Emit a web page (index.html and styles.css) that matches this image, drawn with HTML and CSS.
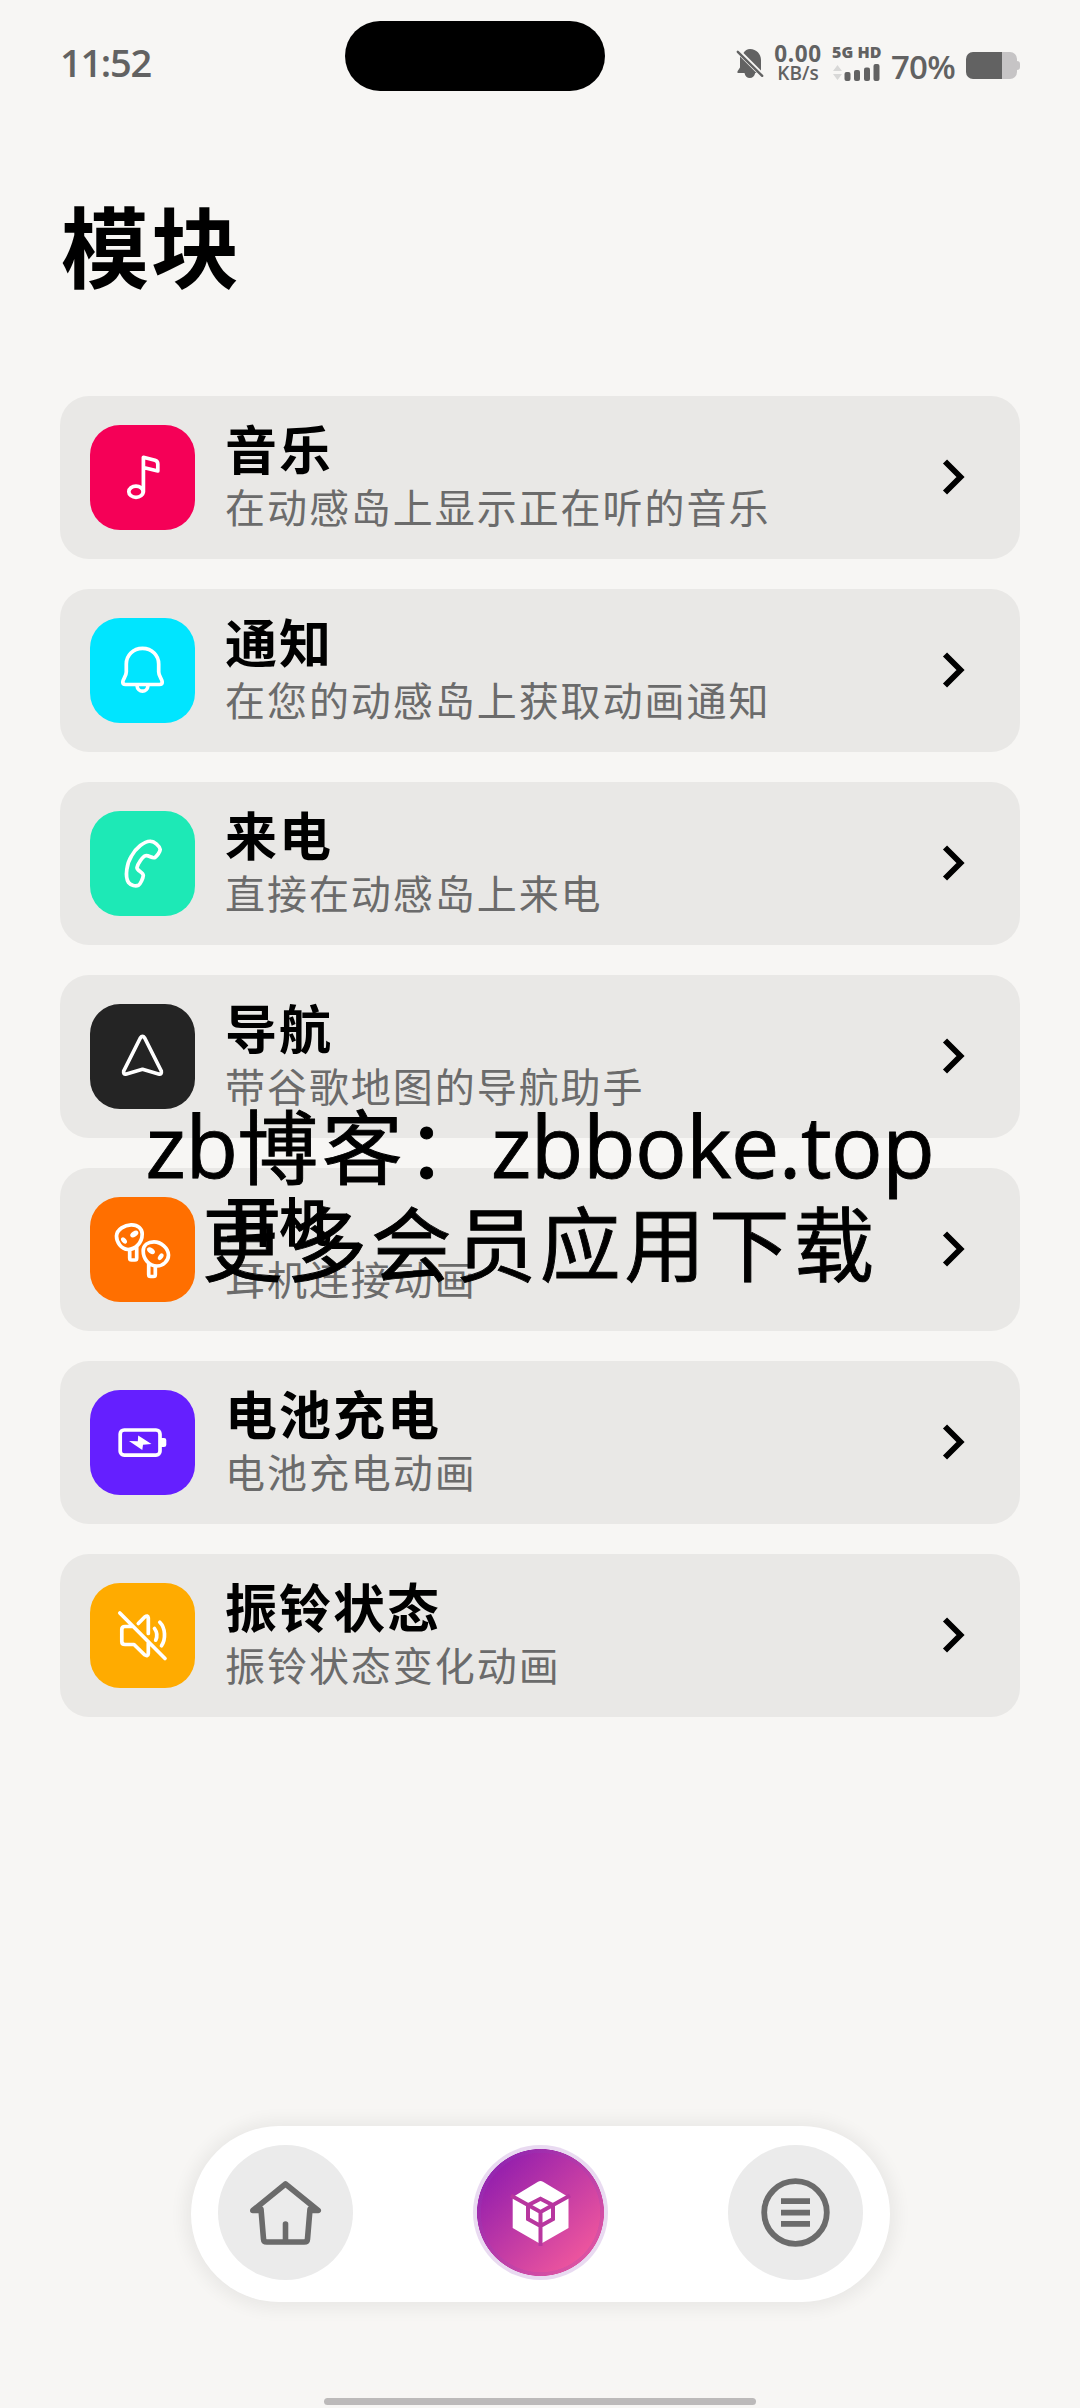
FILE: index.html
```html
<!DOCTYPE html>
<html lang="zh-CN">
<head>
<meta charset="utf-8">
<title>模块</title>
<link rel="stylesheet" href="styles.css">
</head>
<body>
<div class="screen">
  <header class="status">
    <span class="time">11:52</span>
    <div class="island"></div>
    <div class="indicators">
      <svg class="mute-bell" width="28" height="32" viewBox="0 0 28 32" fill="#626262">
        <path d="M7.500 5C9 2.600 11.400 1 14 1c6.500 0 11 5 11 11v10.500zM4 8.500L20.500 25H19.200c-.8 3.200-2.700 5-5.400 5s-4.600-1.800-5.300-5H1.500v-1.800l2.500-3.700z"/>
        <path d="M1.800 3.800L26.200 27.800" stroke="#626262" stroke-width="2.400" stroke-linecap="round"/>
      </svg>
      <div class="speed"><span class="speed-num">0.00</span><span class="speed-unit">KB/s</span></div>
      <div class="network">
        <span class="network-type">5G HD</span>
        <svg width="48" height="17" viewBox="0 0 48 17" fill="#626262">
          <path d="M1 7L5.500 1 10 7zM1 10h9l-4.500 6z" fill="#d8d8d7"/>
          <rect x="12.500" y="8" width="6" height="9" rx="2"/><rect x="22" y="6" width="6" height="11" rx="2"/><rect x="32" y="3.500" width="6" height="13.500" rx="2"/><rect x="41.500" y="0" width="6" height="17" rx="2"/>
        </svg>
      </div>
      <span class="percent">70%</span>
      <svg class="battery" width="54" height="27" viewBox="0 0 54 27">
        <path d="M36 0h8a7 7 0 0 1 7 7v2q3 0 3 3v3q0 3-3 3v2a7 7 0 0 1-7 7h-8z" fill="#c6c4c5"/>
        <path d="M36 0H7a7 7 0 0 0-7 7v13a7 7 0 0 0 7 7h29z" fill="#626262"/>
      </svg>
    </div>
  </header>

  <h1 class="heading">模块</h1>

  <main class="modules">
    <a class="card">
      <span class="tile music"><svg viewBox="0 0 105 105"><ellipse cx="46" cy="66.700" rx="7.200" ry="5.600"/><path d="M53.400 67V32.300L65 35.300Q67.800 36.200 67.800 39V46L53.400 42.500"/></svg></span>
      <span class="text"><b class="name">音乐</b><span class="desc">在动感岛上显示正在听的音乐</span></span>
      <svg class="chevron" viewBox="0 0 24 40"><path d="M3 4.500L18.500 20 3 35.500"/></svg>
    </a>
    <a class="card">
      <span class="tile notice"><svg viewBox="0 0 105 105"><path d="M52.500 30.300C43 30.300 36.300 37.500 36.300 46V54C36.300 58 33 61 32.800 64Q32.800 66.500 35.500 66.500H69.500Q72.200 66.500 72.200 64C72 61 68.700 58 68.700 54V46C68.700 37.500 62 30.300 52.500 30.300ZM47 67.500C47.500 75 57.500 75 58 67.500"/></svg></span>
      <span class="text"><b class="name">通知</b><span class="desc">在您的动感岛上获取动画通知</span></span>
      <svg class="chevron" viewBox="0 0 24 40"><path d="M3 4.500L18.500 20 3 35.500"/></svg>
    </a>
    <a class="card">
      <span class="tile call"><svg viewBox="0 0 105 105"><path d="M61 30.300C64 30.300 69.800 35 70.200 38.500C70 41 67 45 65 46.500C62 47.800 59 44 55.500 44.800C52.500 45.500 47.500 53.500 47 56.500C46.800 60 53.300 61 53.300 64.500C53 67.500 50.500 73 48.500 74.300C45.500 75.500 41 74.500 38.500 71.500C34.500 65 37 52 41.500 45C45.500 37.500 54.500 29.500 61 30.300Z"/></svg></span>
      <span class="text"><b class="name">来电</b><span class="desc">直接在动感岛上来电</span></span>
      <svg class="chevron" viewBox="0 0 24 40"><path d="M3 4.500L18.500 20 3 35.500"/></svg>
    </a>
    <a class="card">
      <span class="tile route"><svg viewBox="0 0 105 105"><path d="M50.300 34Q52.500 30.800 54.700 34L71.300 67Q72 70.800 68.500 70L52.500 65.300 36.500 70Q33 70.800 33.700 67Z"/></svg></span>
      <span class="text"><b class="name">导航</b><span class="desc">带谷歌地图的导航助手</span></span>
      <svg class="chevron" viewBox="0 0 24 40"><path d="M3 4.500L18.500 20 3 35.500"/></svg>
    </a>
    <a class="card">
      <span class="tile buds"><svg viewBox="0 0 105 105">
        <path d="M41 27.800C48 27.500 52.200 32 52.200 37C52.200 46 45 52.500 38 52.500C31 52 26.500 45 26.500 39C27 32 35 28 41 27.800ZM39.700 53V61Q39.700 63 41.500 63H45Q46.700 63 46.700 61V50"/>
        <path d="M64 44.800C71 44.800 78.300 51 78.500 58C78.500 64 73 69 67 69C59 69 53.200 62 53.200 54C53.200 48 58 44.800 64 44.800ZM58.700 67V77.500Q58.700 79.500 60.500 79.500H63.500Q65.300 79.500 65.300 77.500V69"/>
        <g fill="#fff" stroke="none"><ellipse cx="44.300" cy="37" rx="4.500" ry="2.700" transform="rotate(-35 44.300 37)"/><ellipse cx="34" cy="43.500" rx="3.600" ry="2.300" transform="rotate(50 34 43.500)"/><ellipse cx="61" cy="53.800" rx="4.300" ry="2.700" transform="rotate(35 61 53.800)"/><ellipse cx="70.700" cy="59.700" rx="3.700" ry="2.300" transform="rotate(-55 70.700 59.700)"/></g>
      </svg></span>
      <span class="text"><b class="name">耳机</b><span class="desc">耳机连接动画</span></span>
      <svg class="chevron" viewBox="0 0 24 40"><path d="M3 4.500L18.500 20 3 35.500"/></svg>
    </a>
    <a class="card">
      <span class="tile power"><svg viewBox="0 0 105 105"><rect x="30.200" y="40" width="39.800" height="25.200" rx="4"/><path d="M71 48h3q2.300 0 2.300 2v5q0 2-2.300 2h-3zM48.200 45.500L61.500 54 53 54.800 52.300 60 39 51 47.800 51.300Z" fill="#fff" stroke="none"/></svg></span>
      <span class="text"><b class="name">电池充电</b><span class="desc">电池充电动画</span></span>
      <svg class="chevron" viewBox="0 0 24 40"><path d="M3 4.500L18.500 20 3 35.500"/></svg>
    </a>
    <a class="card">
      <span class="tile ring"><svg viewBox="0 0 105 105"><path d="M29.800 30L75 75.500M42 43.500H35Q31.800 43.500 31.800 46.500V58.500Q31.800 61.500 35 61.500H44L54.500 71.800Q58 74 58.300 70.500V58.500M48.300 40.500L54.700 34Q58 31.800 58.300 35V50.500M64.500 45.500Q68.500 51 65.700 57.200M69.800 39.300C75.500 45 76 56 71.500 62.800"/></svg></span>
      <span class="text"><b class="name">振铃状态</b><span class="desc">振铃状态变化动画</span></span>
      <svg class="chevron" viewBox="0 0 24 40"><path d="M3 4.500L18.500 20 3 35.500"/></svg>
    </a>
  </main>

  <nav class="dock">
    <span class="dock-item"><svg viewBox="0 0 135 135" fill="none" stroke="#6b6b6b" stroke-width="5.600" stroke-linecap="round" stroke-linejoin="round"><path d="M42 65.500H34.800L67.500 39 100.200 65.500H93M43 64L45.500 94Q45.700 97 48.700 97H86.300Q89.300 97 89.500 94L92 64"/><path d="M67.500 79V96"/></svg></span>
    <span class="dock-item active"><svg viewBox="0 0 135 135"><path d="M65 36.800Q67.500 35.300 70 36.800L93.700 51Q95.500 52 95.500 54V83L67.500 99 39.700 83V54Q39.700 52 41.500 51Z" fill="#fff"/><path d="M38 50.500L67.500 67 97 50.500M67.500 67V101M67.500 53.700L80 60.300V74L67.500 81 55 74V60.300Z" fill="none" stroke="#b8369f" stroke-width="4"/></svg></span>
    <span class="dock-item"><svg viewBox="0 0 135 135"><circle cx="67.500" cy="67.500" r="31.300" fill="none" stroke="#6b6b6b" stroke-width="5.800"/><path d="M53 53.300h29v5.700H53zM53 64.700h29v5.700H53zM53 76h29v5.700H53z" fill="#6b6b6b"/></svg></span>
  </nav>
  <div class="home-bar"></div>

  <div class="watermark">
    <div class="mark-line"><span class="latin">zb</span>博客：<span class="latin">zbboke.top</span></div>
    <div class="mark-line">更多会员应用下载</div>
  </div>
</div>
</body>
</html>
```
FILE: styles.css
```css
* { box-sizing: border-box; }

body {
  margin: 0;
  background: #f7f6f4;
  font-family: "Noto Sans CJK SC", sans-serif;
  color: #000;
}

.screen {
  position: relative;
  display: flex;
  flex-direction: column;
  width: 1080px;
  height: 2408px;
  overflow: hidden;
}

.status {
  display: grid;
  grid-template-columns: 285px 260px 1fr;
  height: 112px;
  padding: 21px 60px 0;
  color: #626262;
  font-family: "Open Sans", "Noto Sans", sans-serif;
}

.time {
  padding-top: 13px;
  font-size: 38px;
  font-weight: 600;
  line-height: 56px;
  letter-spacing: -1.300px;
}

.island {
  height: 70px;
  border-radius: 35px;
  background: #000;
}

.indicators {
  display: flex;
  justify-content: flex-end;
  align-items: flex-start;
  height: 70px;
  padding-top: 23px;
  white-space: nowrap;
}

.mute-bell { margin: 4px 8px 0 0; }

.speed, .network { display: flex; flex-direction: column; }

.speed { align-items: center; width: 52px; margin-right: 8px; }

.speed-num {
  font-size: 22.500px;
  font-weight: 700;
  line-height: 20px;
  letter-spacing: .6px;
}

.speed-unit {
  font-size: 19px;
  font-weight: 600;
  line-height: 18px;
}

.network { width: 48px; gap: 3px; margin-right: 11px; }

.network-type {
  font-size: 16px;
  font-weight: 800;
  line-height: 17px;
}

.percent {
  width: 67px;
  margin-right: 8px;
  font-size: 33px;
  font-weight: 600;
  line-height: 45px;
  letter-spacing: -.8px;
}

.battery { margin-top: 8px; }

.heading {
  margin: 71px 0 0 61px;
  font-size: 88px;
  font-weight: 700;
  line-height: 120px;
  letter-spacing: 2px;
}

.modules {
  display: flex;
  flex-direction: column;
  gap: 30px;
  margin: 93px 60px 0;
}

.card {
  display: flex;
  align-items: center;
  height: 163px;
  padding: 0 54px 0 30px;
  border-radius: 29px;
  background: #e9e8e6;
}

.tile {
  width: 105px;
  height: 105px;
  border-radius: 30px;
}

.tile svg {
  display: block;
  fill: none;
  stroke: #fff;
  stroke-width: 3.700;
  stroke-linecap: round;
  stroke-linejoin: round;
}

.music { background: #f50057; }
.notice { background: #00e5ff; }
.call { background: #1de9b6; }
.route { background: #242424; }
.buds { background: #ff6f00; }
.power { background: #651fff; }
.ring { background: #ffab00; }

.text {
  display: flex;
  flex: 1;
  flex-direction: column;
  margin-left: 30px;
  padding-bottom: 1px;
}

.name {
  font-size: 52px;
  line-height: 58px;
  letter-spacing: 2px;
}

.desc {
  color: #6b6b6b;
  font-size: 40px;
  line-height: 58px;
  letter-spacing: 1.950px;
}

.chevron {
  width: 24px;
  height: 40px;
  margin-bottom: 1px;
  fill: none;
  stroke: #000;
  stroke-width: 5.800;
}

.dock {
  display: flex;
  justify-content: space-between;
  align-items: flex-start;
  width: 699px;
  height: 176px;
  margin: 409px auto 0;
  padding: 19px 27px;
  border-radius: 88px;
  background: #fff;
  box-shadow: 0 1px 16px 7px rgba(0, 0, 0, .055);
}

.dock-item {
  width: 135px;
  height: 135px;
  border-radius: 50%;
  background: #ebebeb;
}

.dock-item svg { display: block; width: 135px; height: 135px; }

.active {
  background:
    radial-gradient(circle, transparent 59.300px, rgba(145, 70, 185, .2) 60px),
    radial-gradient(circle, transparent 63.200px, #fff 63.800px),
    linear-gradient(135deg, #8e1bae 12%, #f55a9c 88%);
}

.home-bar {
  width: 432px;
  height: 7px;
  margin: 96px auto 0;
  border-radius: 4px;
  background: #bcbaba;
}

.watermark {
  position: absolute;
  top: 1095px;
  left: 0;
  width: 1080px;
  font-size: 80.500px;
  letter-spacing: 4px;
  line-height: 97px;
  text-align: center;
  white-space: nowrap;
  -webkit-text-stroke: .9px #000;
}

.latin {
  font-family: "Open Sans", sans-serif;
  font-size: 86px;
  letter-spacing: -.5px;
  line-height: 1;
}
```
